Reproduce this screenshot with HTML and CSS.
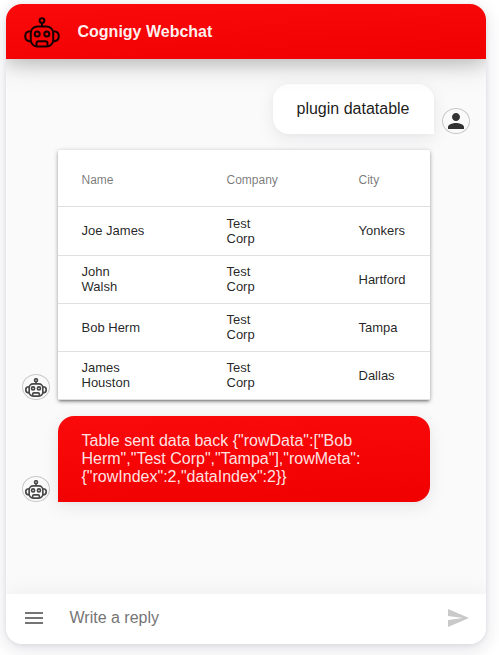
FILE: index.html
```html
<!DOCTYPE html>
<html lang="en">
<head>
<meta charset="utf-8">
<title>Cognigy Webchat</title>
<link rel="stylesheet" href="styles.css">
</head>
<body>
<svg class="defs" aria-hidden="true">
  <symbol id="robot" viewBox="0 0 36 31">
    <g fill="none" stroke="currentColor">
      <circle cx="18" cy="3.600" r="2.400"/>
      <path d="M18 6v3.500"/>
      <rect x="6.800" y="9.500" width="22.400" height="20" rx="6.500"/>
      <path d="M6.500 14.200C3 14.200 1.200 16.500 1.200 19.200S3 24.200 6.800 24.400M29.500 14.200C33 14.200 34.800 16.500 34.800 19.200S33 24.200 29.200 24.400"/>
      <circle cx="13.200" cy="17" r="2.500"/>
      <circle cx="22.800" cy="17" r="2.500"/>
      <path d="M12.500 29.500V26.500Q12.500 24.300 14.700 24.300H21.300Q23.500 24.300 23.500 26.500V29.500"/>
    </g>
  </symbol>
</svg>
<div class="chat">
  <header class="header">
    <svg class="logo"><use href="#robot"/></svg>
    <h1 class="title">Cognigy Webchat</h1>
  </header>
  <main class="history">
    <div class="message user">
      <div class="bubble user-bubble">plugin datatable</div>
      <div class="avatar"><svg class="person" viewBox="0 0 24 24"><path d="M12 12c2.210 0 4-1.790 4-4s-1.790-4-4-4-4 1.790-4 4 1.790 4 4 4zm0 2c-2.670 0-8 1.340-8 4v2h16v-2c0-2.660-5.330-4-8-4z"/></svg></div>
    </div>
    <div class="message">
      <div class="avatar"><svg class="bot"><use href="#robot"/></svg></div>
      <div class="card">
        <table class="table">
          <thead><tr><th class="name">Name</th><th class="company">Company</th><th>City</th></tr></thead>
          <tbody>
            <tr><td>Joe James</td><td>Test<br>Corp</td><td>Yonkers</td></tr>
            <tr><td>John<br>Walsh</td><td>Test<br>Corp</td><td>Hartford</td></tr>
            <tr><td>Bob Herm</td><td>Test<br>Corp</td><td>Tampa</td></tr>
            <tr><td>James<br>Houston</td><td>Test<br>Corp</td><td>Dallas</td></tr>
          </tbody>
        </table>
      </div>
    </div>
    <div class="message">
      <div class="avatar"><svg class="bot"><use href="#robot"/></svg></div>
      <div class="bubble bot-bubble">Table sent data back {"rowData":["Bob<br>Herm","Test Corp","Tampa"],"rowMeta":<br>{"rowIndex":2,"dataIndex":2}}</div>
    </div>
  </main>
  <footer class="footer">
    <svg class="menu" viewBox="0 0 24 24"><path d="M3 18h18v-2H3v2zm0-5h18v-2H3v2zm0-7v2h18V6H3z"/></svg>
    <span class="reply">Write a reply</span>
    <svg class="send" viewBox="0 0 24 24"><path d="M2.010 21L23 12 2.010 3 2 10l15 2-15 2z"/></svg>
  </footer>
</div>
</body>
</html>
```
FILE: styles.css
```css
* { box-sizing: border-box; }

body {
  margin: 0;
  height: 655px;
  padding: 4px 0 0 6px;
  overflow: hidden;
  background: #fff;
  color: rgba(0, 0, 0, .87);
  font: 16px/18px "Liberation Sans", Arial, sans-serif;
}

.defs { display: none; }
svg { flex: none; }

.chat {
  display: flex;
  flex-direction: column;
  width: 480px;
  height: 640px;
  border-radius: 16px;
  overflow: hidden;
  background: #fafafa;
  box-shadow: 0 5px 18px rgba(43, 25, 67, .14), 0 1px 5px rgba(43, 25, 67, .08);
}

.header {
  position: relative;
  display: flex;
  align-items: center;
  flex: none;
  height: 55.400px;
  padding-left: 18px;
  gap: 17.500px;
  background: linear-gradient(177deg, #fa0a0a, #f00000);
  box-shadow: 0 5px 18px rgba(0, 0, 0, .18), 0 5px 32px rgba(0, 0, 0, .12);
}

.logo {
  width: 36px;
  height: 31px;
  margin-top: 1px;
  color: #180000;
  stroke-width: 2;
}

.title {
  margin: 0;
  color: rgba(255, 255, 255, .95);
  font-size: 16px;
  line-height: 18px;
}

.history {
  flex: 1;
  display: flex;
  flex-direction: column;
  gap: 16px;
  padding: 24.600px 16px 0;
}

.message {
  display: flex;
  align-items: flex-end;
  gap: 8px;
}

.user { justify-content: flex-end; }

.bubble {
  padding: 16px 24px 16px 23.500px;
  box-shadow: 0 5px 18px rgba(43, 25, 67, .08), 0 1px 5px rgba(43, 25, 67, .03);
}

.user-bubble {
  width: 161px;
  white-space: nowrap;
  border-radius: 16px 16px 0 16px;
  background: #fff;
  color: rgba(0, 0, 0, .9);
}

.bot-bubble {
  width: 372px;
  border-radius: 16px 16px 16px 0;
  background: linear-gradient(177deg, #fa0a0a, #f00000);
  color: rgba(255, 255, 255, .9);
}

.avatar {
  display: flex;
  align-items: center;
  justify-content: center;
  flex: none;
  width: 28px;
  height: 26px;
  border: 1px solid #c8c8c8;
  border-radius: 50%;
}

.person {
  width: 24px;
  height: 24px;
  fill: #333;
}

.bot {
  width: 22px;
  height: 19px;
  margin-top: 1px;
  color: #484848;
  stroke-width: 2.700;
}

.card {
  width: 372px;
  height: 250px;
  border-radius: 2px;
  background: #fff;
  box-shadow: 0 1px 5px rgba(0, 0, 0, .24), 0 2px 3px rgba(0, 0, 0, .22), 0 3px 1px -2px rgba(0, 0, 0, .12);
}

.table {
  width: 100%;
  table-layout: fixed;
  border-collapse: separate;
  border-spacing: 0;
  font-size: 13px;
  line-height: 15px;
}

.table th,
.table td {
  height: 48px;
  padding: 0 0 0 23.500px;
  border-bottom: 1px solid #e0e0e0;
  text-align: left;
}

.table th {
  height: 57px;
  padding-top: 5px;
  color: rgba(0, 0, 0, .54);
  font-size: 12px;
  font-weight: 400;
}

.table tbody tr:first-child td { height: 49px; }
.name { width: 145px; }
.company { width: 132px; }

.footer {
  position: relative;
  display: flex;
  align-items: center;
  flex: none;
  height: 50px;
  padding: 0 16px 2px;
  background: #fff;
  box-shadow: 0 -5px 18px rgba(0, 0, 0, .04);
}

.menu {
  width: 24px;
  height: 24px;
  fill: #757575;
}

.reply {
  flex: 1;
  margin-left: 23.500px;
  color: #757575;
}

.send {
  width: 24px;
  height: 24px;
  fill: #c9c9c9;
}
```
